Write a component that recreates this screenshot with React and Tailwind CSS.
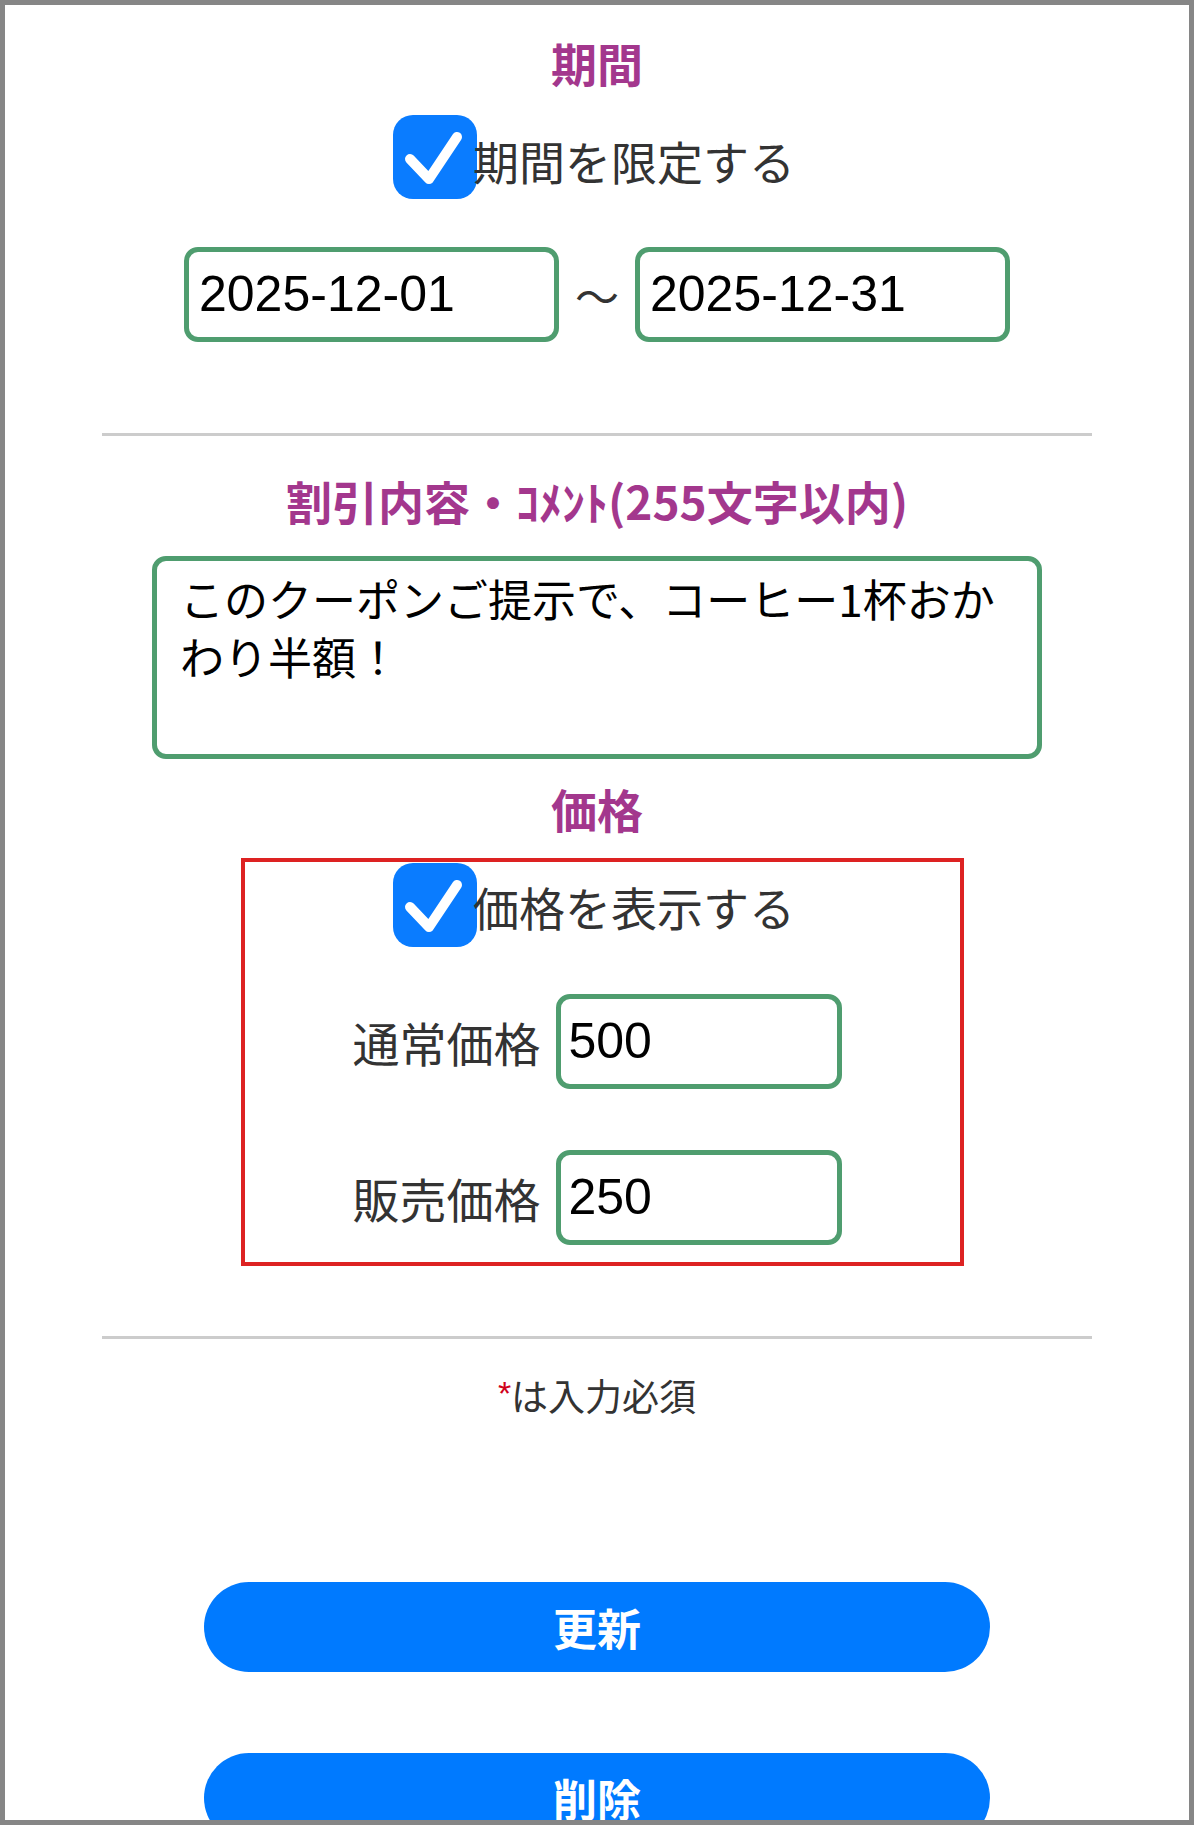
import React from 'react';

function CheckBox() {
  return (
    <div className="w-[84px] h-[84px] shrink-0 rounded-[20px] bg-[#0a7cff] flex items-center justify-center">
      <svg width="84" height="84" viewBox="0 0 84 84">
        <path d="M17 44 L36 64 L64 22" fill="none" stroke="#ffffff" strokeWidth="10" strokeLinecap="round" strokeLinejoin="round" />
      </svg>
    </div>
  );
}

function Heading({ children, className = '' }) {
  return (
    <h2 className={`text-[46px] font-bold leading-[56px] text-[#a3378d] ${className}`}>
      {children}
    </h2>
  );
}

function FieldBox({ value, width, pad }) {
  return (
    <div
      className={`h-[95px] ${width} ${pad} border-[5px] border-[#4f9d6f] rounded-[14px] bg-white flex items-center text-[50px] text-black font-['Liberation_Sans','Noto_Sans_CJK_JP',sans-serif]`}
    >
      {value}
    </div>
  );
}

function PriceRow({ label, value, className = '' }) {
  return (
    <div className={`flex items-center gap-[15px] ${className}`}>
      <span className="text-[47px] leading-[56px] text-[#333333]">{label}</span>
      <FieldBox value={value} width="w-[286px]" pad="pl-[8px]" />
    </div>
  );
}

export default function App() {
  return (
    <div className="w-[1194px] h-[1825px] overflow-hidden bg-white border-[5px] border-[#868686] font-['Noto_Sans_CJK_JP',sans-serif]">
      <div className="flex flex-col items-center pt-[29px]">
        {/* 期間 */}
        <Heading>期間</Heading>
        <div className="flex items-start mt-[25px] pr-[6px]">
          <CheckBox />
          <span className="mt-[17px] -ml-[4px] text-[46px] leading-[56px] text-[#333333]">期間を限定する</span>
        </div>
        <div className="flex items-center mt-[48px]">
          <FieldBox value="2025-12-01" width="w-[375px]" pad="pl-[10px]" />
          <span className="w-[76px] text-center text-[44px] leading-[56px] text-[#333333]">〜</span>
          <FieldBox value="2025-12-31" width="w-[375px]" pad="pl-[10px]" />
        </div>

        <div className="w-[990px] h-[3px] bg-[#cccccc] mt-[91px]" />

        {/* 割引内容 */}
        <Heading className="mt-[36px]">割引内容・ｺﾒﾝﾄ(255文字以内)</Heading>
        <div className="mt-[28px] w-[890px] h-[203px] border-[5px] border-[#4f9d6f] rounded-[14px] pt-[8px] px-[23px] text-[44px] leading-[58px] text-black">
          このクーポンご提示で、コーヒー1杯おかわり半額！
        </div>

        {/* 価格 */}
        <Heading className="mt-[21px]">価格</Heading>
        <div className="mt-[22px] ml-[11px] w-[723px] h-[408px] border-4 border-[#dd2222] pt-[1px] pr-[11px] flex flex-col items-center">
          <div className="flex items-start pr-[6px]">
            <CheckBox />
            <span className="mt-[15px] -ml-[4px] text-[46px] leading-[56px] text-[#333333]">価格を表示する</span>
          </div>
          <PriceRow className="mt-[47px]" label="通常価格" value="500" />
          <PriceRow className="mt-[61px]" label="販売価格" value="250" />
        </div>

        <div className="w-[990px] h-[3px] bg-[#cccccc] mt-[70px]" />

        <p className="mt-[32px] h-[48px] text-[37px] leading-[48px] text-[#333333]">
          <span className="text-[#d0021b] text-[34px] leading-none font-['Liberation_Sans',sans-serif] relative -top-[6px]">*</span>は入力必須
        </p>

        <button className="mt-[163px] w-[786px] h-[90px] rounded-full bg-[#007aff] text-white text-[44px] font-bold">
          更新
        </button>
        <button className="mt-[81px] w-[786px] h-[90px] rounded-full bg-[#007aff] text-white text-[44px] font-bold">
          削除
        </button>
      </div>
    </div>
  );
}
